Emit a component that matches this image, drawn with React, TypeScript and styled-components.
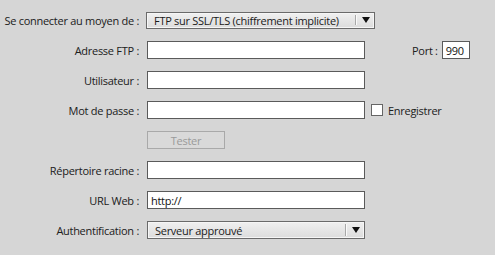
import React from "react";
import styled, { createGlobalStyle } from "styled-components";

const Global = createGlobalStyle`
  html, body { margin: 0; padding: 0; background: #d6d6d6; }
  body { font-family: "Open Sans", "Noto Sans", sans-serif; font-size: 11px; letter-spacing: -0.28px; color: #1e1e1e; }
`;

const Form = styled.div`
  width: 495px;
  height: 255px;
  box-sizing: border-box;
  padding: 11px 0 0 8px;
  display: grid;
  grid-template-columns: 131px 1fr;
  column-gap: 8px;
  row-gap: 12px;
  grid-auto-rows: 18px;
  background: #d6d6d6;
`;

const Label = styled.div`
  display: flex;
  align-items: center;
  justify-content: flex-end;
  white-space: nowrap;
  font-size: 11px;
  color: #202020;
`;

const Field = styled.div<{ $shift?: number }>`
  display: flex;
  align-items: center;
  margin-left: ${(p) => p.$shift ?? 0}px;
`;

const TextInput = styled.div<{ $w: number }>`
  box-sizing: border-box;
  width: ${(p) => p.$w}px;
  height: 18px;
  background: #fff;
  border: 1px solid #5a5a5a;
  display: flex;
  align-items: center;
  padding-left: 3px;
  font-size: 11px;
  color: #111;
`;

const Select = styled.div<{ $w: number; $h: number }>`
  box-sizing: border-box;
  width: ${(p) => p.$w}px;
  height: ${(p) => p.$h}px;
  border: 1px solid #6a6a6a;
  background: linear-gradient(#f0f0f0, #dcdcdc);
  display: flex;
  align-items: center;
  font-size: 11px;
  color: #1a1a1a;
  box-shadow: inset 0 0 0 1px #f6f6f6;
`;

const SelectText = styled.span`
  flex: 1;
  padding-left: 7px;
  white-space: nowrap;
  overflow: hidden;
`;

const Divider = styled.span`
  width: 1px;
  height: 70%;
  background: #a8a8a8;
  border-right: 1px solid #fafafa;
`;

const Arrow = styled.span`
  width: 17px;
  display: flex;
  justify-content: center;
  &::before {
    content: "";
    border-left: 4px solid transparent;
    border-right: 4px solid transparent;
    border-top: 6px solid #111;
  }
`;

const PortLabel = styled.span`
  margin-left: 47px;
  margin-right: 4px;
  font-size: 11px;
  color: #202020;
`;

const Check = styled.span`
  box-sizing: border-box;
  width: 12px;
  height: 12px;
  border: 1px solid #666;
  background: #fff;
  margin-left: 6px;
  margin-right: 5px;
`;

const CheckLabel = styled.span`
  font-size: 11px;
  color: #202020;
`;

const Button = styled.div`
  box-sizing: border-box;
  width: 78px;
  height: 18px;
  border: 1px solid #a9a9a9;
  background: #d9d9d9;
  color: #9a9a9a;
  font-size: 11px;
  display: flex;
  align-items: center;
  justify-content: center;
`;

export default function App() {
  return (
    <>
      <Global />
      <Form>
        <Label>Se connecter au moyen de :</Label>
        <Field $shift={-1}>
          <Select $w={229} $h={17}>
            <SelectText>FTP sur SSL/TLS (chiffrement implicite)</SelectText>
            <Divider />
            <Arrow />
          </Select>
        </Field>

        <Label>Adresse FTP :</Label>
        <Field>
          <TextInput $w={218} />
          <PortLabel>Port :</PortLabel>
          <TextInput $w={28}>990</TextInput>
        </Field>

        <Label>Utilisateur :</Label>
        <Field>
          <TextInput $w={218} />
        </Field>

        <Label>Mot de passe :</Label>
        <Field>
          <TextInput $w={218} />
          <Check />
          <CheckLabel>Enregistrer</CheckLabel>
        </Field>

        <span />
        <Field>
          <Button>Tester</Button>
        </Field>

        <Label>Répertoire racine :</Label>
        <Field>
          <TextInput $w={218} />
        </Field>

        <Label>URL Web :</Label>
        <Field>
          <TextInput $w={218}>http://</TextInput>
        </Field>

        <Label>Authentification :</Label>
        <Field>
          <Select $w={218} $h={18}>
            <SelectText>Serveur approuvé</SelectText>
            <Divider />
            <Arrow />
          </Select>
        </Field>
      </Form>
    </>
  );
}
